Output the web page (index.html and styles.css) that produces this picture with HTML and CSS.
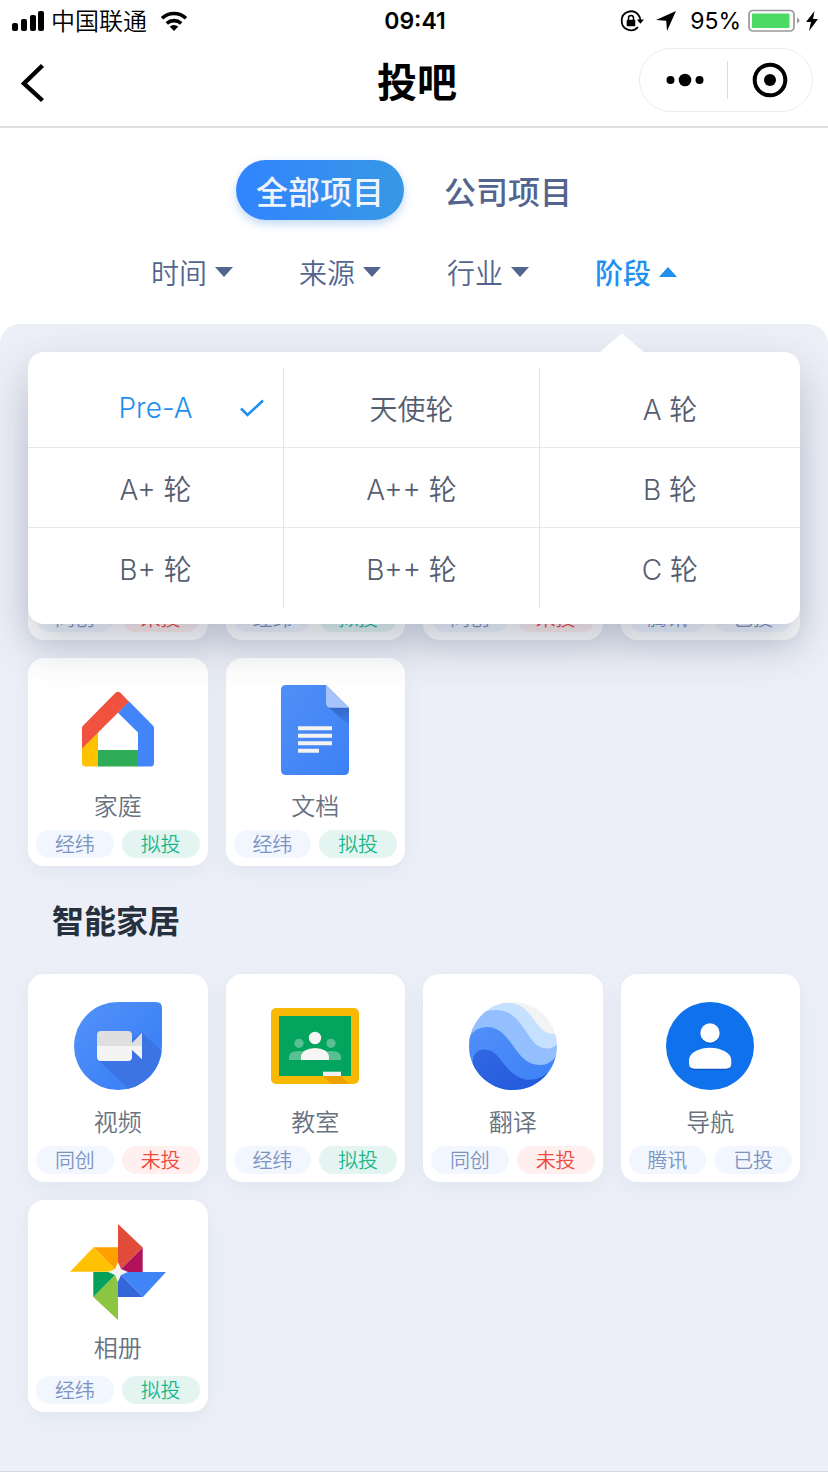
FILE: index.html
```html
<!DOCTYPE html>
<html lang="zh-CN">
<head>
<meta charset="utf-8">
<meta name="viewport" content="width=device-width, initial-scale=1">
<title>投吧</title>
<link rel="stylesheet" href="styles.css">
</head>
<body>
<div class="status">
  <div class="status-left">
    <svg width="32" height="20" viewBox="0 0 32 20"><rect x="0" y="12" width="6" height="8" rx="2"/><rect x="9" y="8" width="6" height="12" rx="2"/><rect x="18" y="4" width="6" height="16" rx="2"/><rect x="26" y="0" width="6" height="20" rx="2"/></svg>
    <span class="carrier">中国联通</span>
    <svg class="wifi" width="28" height="20" viewBox="0 0 28 20"><path d="M14 20l4.300-4.400a6.500 6.500 0 0 0-8.600 0z"/><path d="M6.800 12.300a11 11 0 0 1 14.400 0M2 7.300a17.500 17.500 0 0 1 24 0" fill="none" stroke="#000" stroke-width="3.600"/></svg>
  </div>
  <time class="clock">09:41</time>
  <div class="status-right">
    <svg width="24" height="22" viewBox="0 0 24 22"><path d="M18.300 4.900A9.300 9.300 0 0 0 1.700 11a9.300 9.300 0 0 0 16.200 6.200M18.300 4.900q2.200 2.600 2 6" fill="none" stroke="#000" stroke-width="1.800"/><path d="M16.800 9.600h7.200l-3.600 4.200z"/><rect x="6.700" y="9.700" width="8.600" height="6.600" rx="1"/><path d="M8.500 10.500V8a2.500 2.500 0 0 1 5 0v2.500" fill="none" stroke="#000" stroke-width="1.500"/></svg>
    <svg class="locate" width="20" height="20" viewBox="0 0 20 20"><path d="M20 0L11 20l-.8-10.200L0 9z"/></svg>
    <span class="percent">95%</span>
    <svg width="52" height="24" viewBox="0 0 52 24"><rect x="1" y="1.500" width="45" height="20.500" rx="4" fill="#fff" stroke="#999" stroke-width="1.700"/><rect x="4" y="4.500" width="37.500" height="14.500" rx="1" fill="#4cd964"/><path d="M49 8.500q5 3 0 6z" fill="#999"/></svg>
    <svg class="bolt" width="12" height="20" viewBox="0 0 12 20"><path d="M8.500 0L0 11h5L3 20l9-12H7z"/></svg>
  </div>
</div>

<header class="nav">
  <button class="back" aria-label="返回"><svg width="24" height="40" viewBox="0 0 24 40"><path d="M21.500 2.500L3 20.500l18.500 17" fill="none" stroke="#000" stroke-width="4.400"/></svg></button>
  <h1 class="title">投吧</h1>
  <div class="capsule">
    <button class="capsule-btn" aria-label="更多"><svg width="40" height="16" viewBox="0 0 40 16"><circle cx="5.500" cy="8" r="4"/><circle cx="20" cy="8" r="6.300"/><circle cx="34.500" cy="8" r="4"/></svg></button>
    <button class="capsule-btn" aria-label="关闭"><svg width="36" height="36" viewBox="0 0 36 36"><circle cx="18" cy="18" r="15.300" fill="none" stroke="#000" stroke-width="4"/><circle cx="18" cy="18" r="6"/></svg></button>
  </div>
</header>

<nav class="tabs">
  <button class="tab tab-active">全部项目</button>
  <button class="tab">公司项目</button>
</nav>

<div class="filters">
  <button class="filter">时间<svg width="18" height="10" viewBox="0 0 18 10"><path d="M0 0h18L9 10z"/></svg></button>
  <button class="filter">来源<svg width="18" height="10" viewBox="0 0 18 10"><path d="M0 0h18L9 10z"/></svg></button>
  <button class="filter">行业<svg width="18" height="10" viewBox="0 0 18 10"><path d="M0 0h18L9 10z"/></svg></button>
  <button class="filter filter-open" aria-expanded="true">阶段<svg width="18" height="10" viewBox="0 0 18 10"><path d="M0 10h18L9 0z"/></svg></button>
</div>

<main class="panel">
  <section class="cards cards-first">
    <article class="card"><div class="tags"><span class="tag">同创</span><span class="tag tag-red">未投</span></div></article>
    <article class="card"><div class="tags"><span class="tag">经纬</span><span class="tag tag-green">拟投</span></div></article>
    <article class="card"><div class="tags"><span class="tag">同创</span><span class="tag tag-red">未投</span></div></article>
    <article class="card"><div class="tags"><span class="tag">腾讯</span><span class="tag">已投</span></div></article>

    <article class="card">
      <svg class="icon" viewBox="0 0 96 96">
        <path d="M48 30.700L59 19.300 83 43.700q1 1 1 2.300V81q0 3.500-3.500 3.500H68V50.500z" fill="#4285f9"/>
        <path d="M28 68h40v16.500H28z" fill="#2fac57"/>
        <path d="M12 66L28 50v34.500H15.500Q12 84.500 12 81z" fill="#fec200"/>
        <path d="M12 66.500V46q0-1.300 1-2.300L45.500 10.800q2.500-2 5 0L59 19.700z" fill="#f1513f"/>
      </svg>
      <h3 class="name">家庭</h3>
      <div class="tags"><span class="tag">经纬</span><span class="tag tag-green">拟投</span></div>
    </article>
    <article class="card">
      <svg class="icon" viewBox="0 0 96 96">
        <defs>
          <linearGradient id="doc" x1="0" y1="0" x2="1" y2="1"><stop offset="0" stop-color="#508ff6"/><stop offset="1" stop-color="#3d81f6"/></linearGradient>
          <linearGradient id="docShade" x1="0" y1="0" x2="0" y2="1"><stop offset="0" stop-color="#3365c8"/><stop offset="1" stop-color="#3f7fee"/></linearGradient>
        </defs>
        <path d="M19 3h40l23 22.700V88q0 5-5 5H19q-5 0-5-5V8q0-5 5-5z" fill="url(#doc)"/>
        <path d="M61 24.500L82 44V25.700z" fill="url(#docShade)"/>
        <path d="M59 3l23 22.700H64q-5 0-5-5z" fill="#a6c4fb"/>
        <path d="M31 44.300h34v4H31zM31 51.800h34v4H31zM31 59.300h34v4H31zM31 66.800h21v4H31z" fill="#f3f3f3"/>
      </svg>
      <h3 class="name">文档</h3>
      <div class="tags"><span class="tag">经纬</span><span class="tag tag-green">拟投</span></div>
    </article>
  </section>

  <h2 class="heading">智能家居</h2>
  <section class="cards">
    <article class="card">
      <svg class="icon" viewBox="0 0 96 96">
        <defs>
          <linearGradient id="duo" x1="0" y1="0" x2="1" y2="1"><stop offset="0" stop-color="#5492f7"/><stop offset=".7" stop-color="#3d82f7"/></linearGradient>
          <clipPath id="duoShape"><path d="M48 4h38q6 0 6 6v38A44 44 0 1 1 48 4z"/></clipPath>
        </defs>
        <path d="M48 4h38q6 0 6 6v38A44 44 0 1 1 48 4z" fill="url(#duo)"/>
        <path d="M72 34.700L96 57v39H64L28 62z" fill="#3c74e4" clip-path="url(#duoShape)"/>
        <path d="M27 48V37q0-4 4-4h27q4 0 4 4v8l10-10.300V48z" fill="#dfdfdf"/>
        <path d="M27 48h45v13.300L62 52v7q0 4-4 4H31q-4 0-4-4z" fill="#f4f4f4"/>
      </svg>
      <h3 class="name">视频</h3>
      <div class="tags"><span class="tag">同创</span><span class="tag tag-red">未投</span></div>
    </article>
    <article class="card">
      <svg class="icon" viewBox="0 0 96 96">
        <rect x="4" y="10" width="88" height="76" rx="5" fill="#f8b904"/>
        <path d="M12 18h72v60H12z" fill="#03a45e"/>
        <g fill="#59c093"><circle cx="32" cy="45.300" r="4.600"/><circle cx="64" cy="45.300" r="4.600"/><path d="M22 62v-3q0-6 10-6t10 6v3zM54 62v-3q0-6 10-6t10 6v3z"/></g>
        <circle cx="48" cy="40" r="6.200" fill="#f5f5f5"/>
        <path d="M34 62v-3q0-4 4-6.500 4-2.500 10-2.500t10 2.500q4 2.500 4 6.500v3z" fill="#f5f5f5"/>
        <path d="M56 78h18l8 8H64z" fill="#eda103"/>
        <path d="M56 73.700h18V78H56z" fill="#f1f1f1"/>
      </svg>
      <h3 class="name">教室</h3>
      <div class="tags"><span class="tag">经纬</span><span class="tag tag-green">拟投</span></div>
    </article>
    <article class="card">
      <svg class="icon" viewBox="0 0 96 96">
        <defs>
          <clipPath id="globe"><circle cx="48" cy="48" r="44"/></clipPath>
          <linearGradient id="deep" x1="0" y1="0" x2="1" y2="1"><stop offset="0" stop-color="#3167e2"/><stop offset="1" stop-color="#2058da"/></linearGradient>
          <linearGradient id="sea" x1="0" y1="0" x2="1" y2="1"><stop offset="0" stop-color="#528ff8"/><stop offset="1" stop-color="#3a80f7"/></linearGradient>
        </defs>
        <g clip-path="url(#globe)">
          <path d="M0 0h96v96H0z" fill="#f3f3f3"/>
          <path d="M0 5h44C59 5 65 17 73 27q9 12 23 8v61H0z" fill="#c6e1ff"/>
          <path d="M0 30Q12 12 31 12C47 12 55 24 62 35s12 15.500 21 15.500q6 0 13-8v53.500H0z" fill="#94bffe"/>
          <path d="M0 48Q6 29 22 29c14 0 21 12 29 23s15 15 25 15q11 0 20-16v45H0z" fill="url(#sea)"/>
          <path d="M8 66C7 58 11 51.500 19 51.500c11 0 15 8.500 22 17 7 8 14 13.300 24 13.300q11 0 21-9.800l-5 24H12z" fill="url(#deep)"/>
        </g>
      </svg>
      <h3 class="name">翻译</h3>
      <div class="tags"><span class="tag">同创</span><span class="tag tag-red">未投</span></div>
    </article>
    <article class="card">
      <svg class="icon" viewBox="0 0 96 96">
        <circle cx="48" cy="48" r="44" fill="#1071ec"/>
        <g fill="#0d55bd"><circle cx="48" cy="36" r="9.700"/><path d="M27 63.500q0-5 5-8.500 7-4.300 16-4.300T64 55q5.300 3.500 5.300 8.500v3q0 5.500-5.300 5.500H32.500Q27 72 27 66.500z"/></g>
        <g fill="#fff"><circle cx="48" cy="35" r="9.700"/><path d="M27 62.500q0-5 5-8.500 7-4.300 16-4.300T64 54q5.300 3.500 5.300 8.500v3q0 5.200-5.300 5.200H32.500Q27 70.700 27 65.500z"/></g>
      </svg>
      <h3 class="name">导航</h3>
      <div class="tags"><span class="tag">腾讯</span><span class="tag">已投</span></div>
    </article>
    <article class="card card-tall">
      <svg class="icon" viewBox="0 0 96 96">
        <path d="M48 0l24.700 23.500L48 48z" fill="#e14b39"/>
        <path d="M72.700 23.500V48H48z" fill="#b1125b"/>
        <path d="M48 48h48L73 73z" fill="#4184f8"/>
        <path d="M48 48l25 25H48z" fill="#3366d6"/>
        <path d="M48 48v48L23.300 73z" fill="#8bc541"/>
        <path d="M23.300 48H48L23.300 73z" fill="#04a05c"/>
        <path d="M0 47.700l23.300-24.200L48 47.700z" fill="#ffc201"/>
        <path d="M23.300 23.300H48V48z" fill="#ffa001"/>
        <path d="M48 38l3 7 7 3-7 3-3 7-3-7-7-3 7-3z" fill="#f3f3f3"/>
      </svg>
      <h3 class="name">相册</h3>
      <div class="tags"><span class="tag">经纬</span><span class="tag tag-green">拟投</span></div>
    </article>
  </section>

  <div class="popover">
    <svg class="pointer" width="44" height="18" viewBox="0 0 44 18"><path d="M0 18L20 1q2-2 4 0l20 17z" fill="#fff"/></svg>
    <div class="options">
      <button class="option option-on" aria-pressed="true"><span class="option-text">Pre-A</span><svg class="check" width="24" height="18" viewBox="0 0 24 18"><path d="M1 9.500l6.500 6.500L23 1.500" fill="none" stroke="#1f90ef" stroke-width="2.600"/></svg></button>
      <button class="option"><span class="option-text">天使轮</span></button>
      <button class="option"><span class="option-text">A 轮</span></button>
      <button class="option"><span class="option-text">A+ 轮</span></button>
      <button class="option"><span class="option-text">A++ 轮</span></button>
      <button class="option"><span class="option-text">B 轮</span></button>
      <button class="option"><span class="option-text">B+ 轮</span></button>
      <button class="option"><span class="option-text">B++ 轮</span></button>
      <button class="option"><span class="option-text">C 轮</span></button>
    </div>
  </div>
</main>
</body>
</html>
```
FILE: styles.css
```css
* {
  box-sizing: border-box;
}

body {
  margin: 0;
  min-height: 100vh;
  display: flex;
  flex-direction: column;
  background: #fff;
  color: #000;
  font-family: Inter, "Noto Sans CJK SC", sans-serif;
}

button {
  margin: 0;
  padding: 0;
  border: 0;
  background: none;
  color: inherit;
  font: inherit;
  cursor: pointer;
}

svg {
  display: block;
  flex: none;
}

.status {
  display: grid;
  grid-template-columns: 1fr auto 1fr;
  align-items: center;
  height: 42px;
  padding: 0 10px 0 12px;
}

.status-left,
.status-right {
  display: flex;
  align-items: center;
}

.status-right {
  justify-content: flex-end;
}

.carrier {
  margin-left: 7px;
  padding-bottom: 3px;
  font-size: 24px;
  font-weight: 350;
}

.wifi {
  margin-left: 13px;
}

.clock {
  font-size: 23px;
  font-weight: 600;
}

.locate {
  margin: 0 14px 0 12px;
}

.percent {
  margin-right: 7px;
  font-size: 23px;
}

.bolt {
  margin-left: 6px;
}

.nav {
  display: grid;
  grid-template-columns: 1fr auto 1fr;
  align-items: center;
  height: 86px;
  padding: 6px 15px 14px 21px;
  border-bottom: 2px solid #dfdfdf;
}

.back {
  justify-self: start;
  padding-top: 6px;
}

.title {
  margin: 0;
  padding-top: 6px;
  font-size: 40px;
  font-weight: 700;
  line-height: 58px;
}

.capsule {
  justify-self: end;
  display: flex;
  align-items: center;
  width: 174px;
  height: 64px;
  border: 1px solid #ececec;
  border-radius: 32px;
}

.capsule-btn {
  flex: 1;
  height: 38px;
  padding-left: 3px;
  display: grid;
  place-items: center;
}

.capsule-btn + .capsule-btn {
  padding-left: 0;
  border-left: 1px solid #dcdcdc;
}

.tabs {
  display: flex;
  justify-content: center;
  gap: 20px;
  padding-top: 32px;
}

.tab {
  height: 60px;
  padding: 0 20px;
  border-radius: 30px;
  color: #53658f;
  font-size: 32px;
  font-weight: 500;
}

.tab-active {
  background: linear-gradient(90deg, #3184ff, #3898e4);
  box-shadow: 0 4px 10px rgba(50, 130, 230, 0.3);
  color: #eef3fc;
}

.filters {
  display: flex;
  justify-content: center;
  gap: 66px;
  padding: 32px 0;
}

.filter {
  display: flex;
  align-items: center;
  gap: 8px;
  height: 40px;
  color: #53658f;
  fill: currentColor;
  font-size: 28px;
  font-weight: 350;
}

.filter-open {
  color: #1f90ef;
  font-weight: 500;
}

.panel {
  position: relative;
  flex: 1;
  padding: 0 28px 59px;
  border-bottom: 1px solid #d5d8e0;
  border-radius: 20px 20px 0 0;
  background: #eceff7;
}

.cards {
  display: grid;
  grid-template-columns: repeat(4, 1fr);
  gap: 18px;
}

.cards-first {
  padding-top: 108px;
}

.heading {
  margin: 0;
  padding: 34px 24px 30px;
  color: #27313d;
  font-size: 32px;
  font-weight: 700;
  line-height: 44px;
}

.card {
  display: flex;
  flex-direction: column;
  align-items: center;
  min-height: 208px;
  padding: 24px 8px 8px;
  border-radius: 16px;
  background: #fff;
  box-shadow: 0 6px 20px rgba(90, 110, 160, 0.07);
}

.card-tall {
  min-height: 212px;
}

.icon {
  width: 96px;
  height: 96px;
}

.name {
  margin: 12px 0 0;
  color: #68727f;
  font-size: 24px;
  font-weight: 350;
  line-height: 34px;
}

.tags {
  display: flex;
  gap: 8px;
  width: 100%;
  margin-top: auto;
}

.tag {
  flex: 1;
  padding-top: 2px;
  border-radius: 14px;
  background: #f2f6ff;
  color: #7d93c0;
  font-size: 20px;
  font-weight: 350;
  line-height: 26px;
  text-align: center;
}

.tag-green {
  background: #e4f5f1;
  color: #19b88b;
}

.tag-red {
  background: #ffefee;
  color: #ee4a3c;
}

.popover {
  position: absolute;
  top: 28px;
  left: 28px;
  right: 28px;
  padding: 16px 0;
  border-radius: 16px;
  background: #fff;
  box-shadow: 0 20px 44px rgba(50, 60, 90, 0.28);
}

.pointer {
  position: absolute;
  right: 156px;
  bottom: 100%;
}

.options {
  display: grid;
  grid-template-columns: 64fr 64fr 65fr;
}

.option {
  display: grid;
  grid-template-columns: 1fr auto 1fr;
  align-items: center;
  height: 80px;
  border-right: 1px solid #e4e6ef;
  border-bottom: 1px solid #e4e6ef;
  color: #555d70;
  font-size: 28px;
  font-weight: 350;
}

.option:nth-child(3n) {
  border-right: 0;
}

.option:nth-child(n + 7) {
  border-bottom: 0;
}

.option-text {
  grid-column: 2;
}

.option-on {
  color: #1f90ef;
}

.check {
  justify-self: end;
  margin-right: 19px;
}
```
